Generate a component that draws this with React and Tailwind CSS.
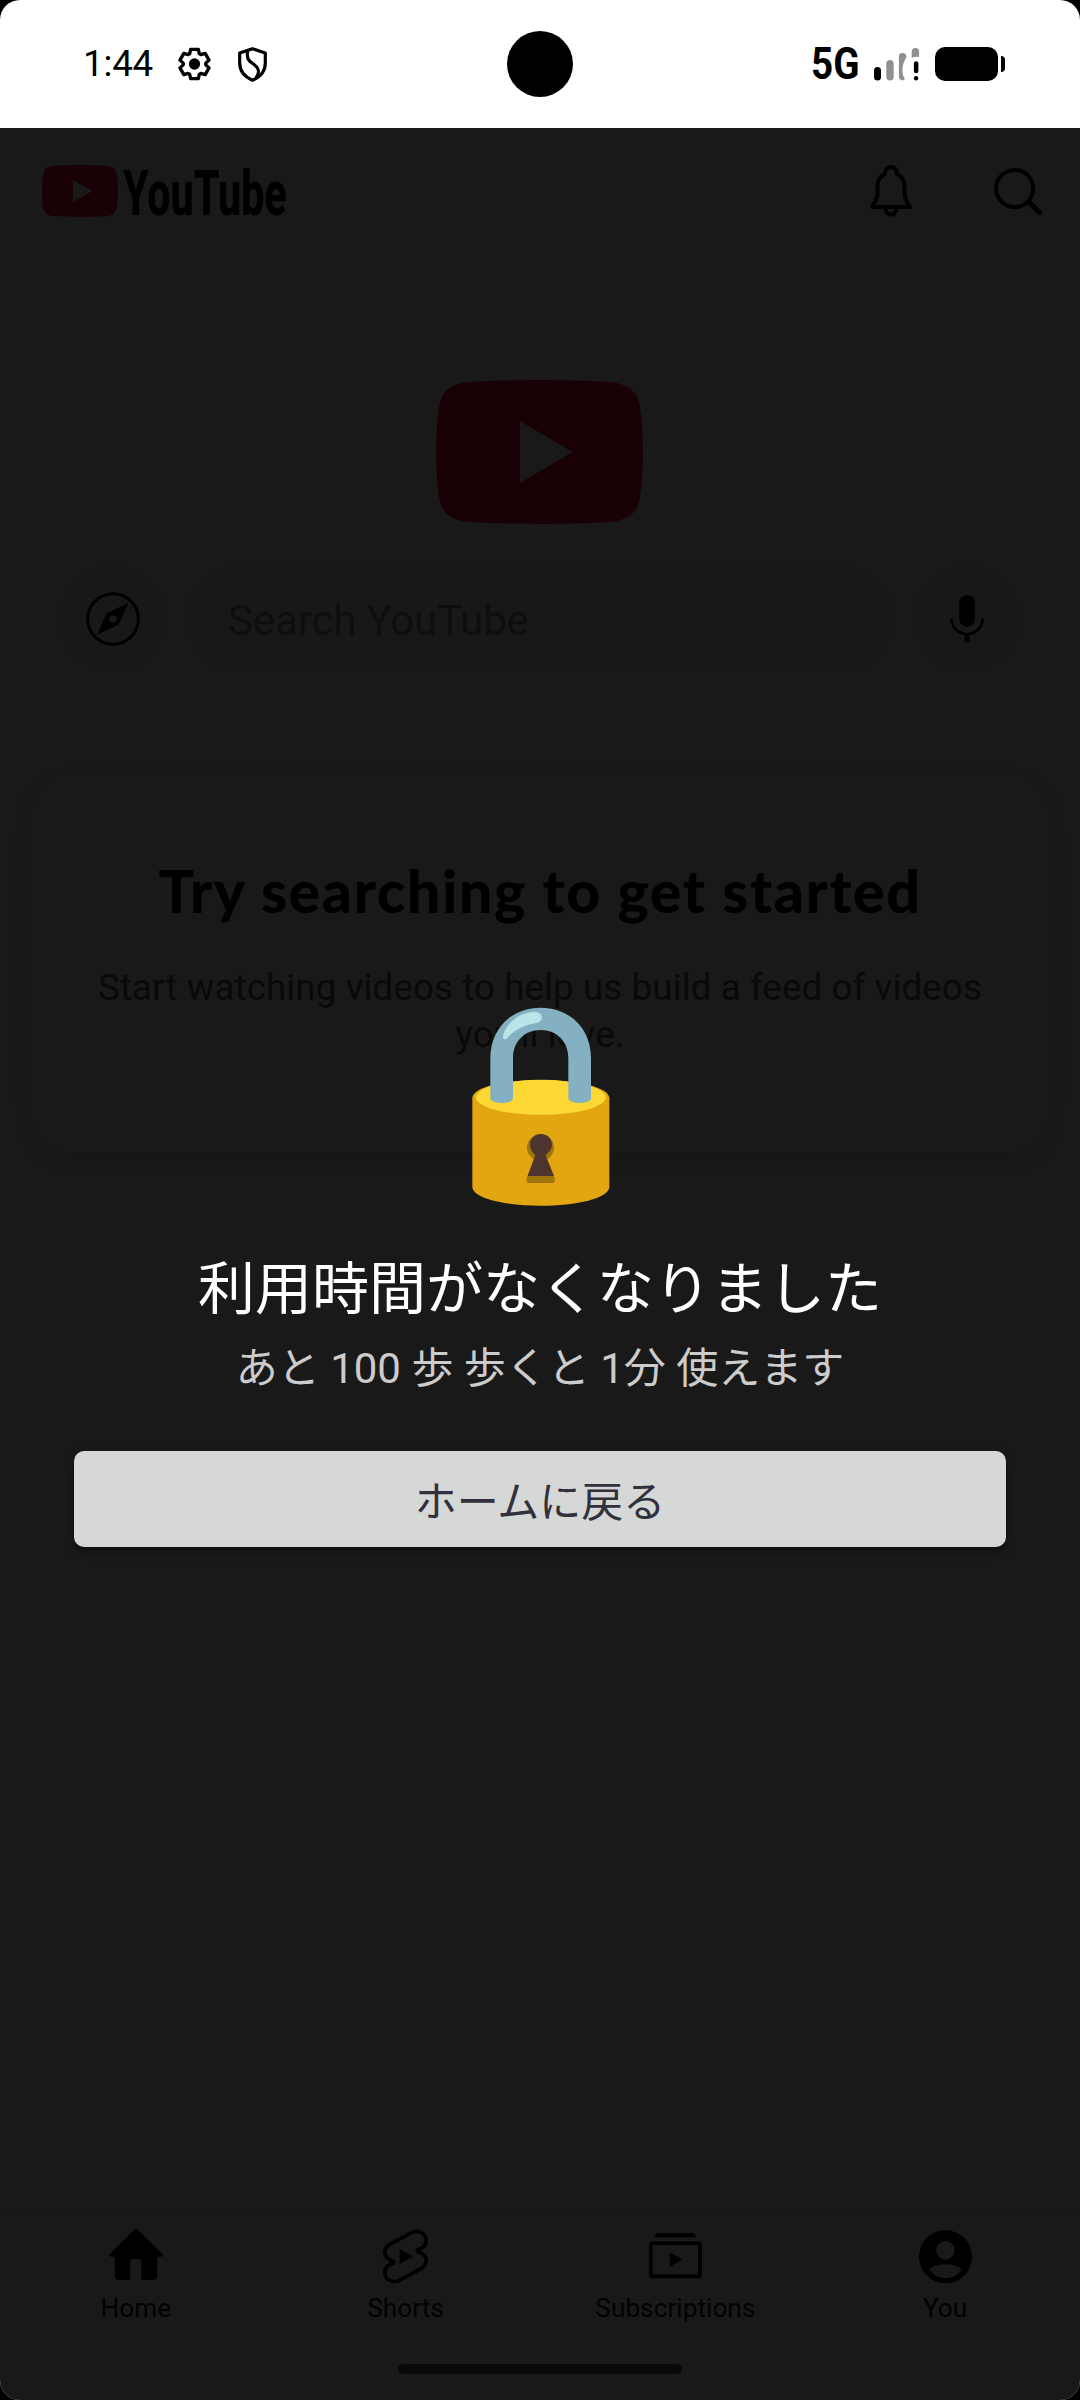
function SettingsGear() {
    return (
        <svg viewBox="-17 -17 34 34" className="h-[34px] w-[33px]">
            <path
                d="M-5-10.5-4-15H4l1 4.5 1.6.9L11-11l4 7-3.4 3.1v1.8L15 4l-4 7-4.4-1.4-1.6.9L4 15h-8l-1-4.5-1.6-.9L-11 11l-4-7 3.4-3.1V-.9L-15-4l4-7 4.4 1.4Z"
                fill="none" stroke="black" strokeWidth="3.4" strokeLinejoin="round"
            />
            <circle r="5.8" />
        </svg>
    )
}

function Shield() {
    return (
        <svg viewBox="0 0 29 35" className="h-[35px] w-[29px]" fill="none" stroke="black" strokeWidth="3.2" strokeLinejoin="round">
            <path d="M14.5 1.7 27.3 6v10c0 8-5.3 14-12.8 17.2C7 30 1.7 24 1.7 16V6Z" />
            <path d="M9.6 4c-1.4 9 2.4 10.5 6.4 13.5 6 4.5 5.5 8.5 2 13.5" />
        </svg>
    )
}

function Signal() {
    return (
        <svg viewBox="0 0 46 33" className="h-[33px] w-[46px]">
            <rect y="19" width="7" height="13.5" rx="3.5" />
            <g fill="#909090">
                <rect x="12.3" y="12" width="7.4" height="20.5" rx="3.7" />
                <path d="M24.9 8.7a3.7 3.7 0 0 1 7.4 0v.8q-7 11.500-1.500 21.800c-2.300 2.500-5.900.5-5.900-2.500Z" />
                <path d="M37.7 3.7a3.7 3.7 0 0 1 7.4 0V9q-3.7-1-7.4 1Z" />
            </g>
            <rect x="39.9" y="13.3" width="4.5" height="12" rx="2.2" />
            <circle cx="42.1" cy="30.2" r="2.2" />
        </svg>
    )
}

function StatusBar() {
    return (
        <div className="relative flex h-32 shrink-0 items-center justify-between bg-white pr-[75px] pl-[83px] text-black">
            <div className="flex items-center">
                <span className="w-[95px] text-[36.75px] leading-none tracking-[-0.2px]">1:44</span>
                <SettingsGear />
                <div className="w-[27px]" />
                <Shield />
            </div>
            <div className="flex items-center">
                <span className="mr-[7px] w-[56px] origin-left scale-x-[0.877] text-[44px] leading-[52px] font-bold">5G</span>
                <Signal />
                <div className="ml-[15px] h-[34px] w-[63px] rounded-[10px] bg-black" />
                <div className="ml-[3px] h-4 w-1 rounded-r-full bg-black" />
            </div>
            <div className="absolute top-[31px] left-[507px] size-[66px] rounded-full bg-black" />
        </div>
    )
}

function PlayLogo({ className }) {
    return (
        <svg viewBox="0 0 207 144" className={className} preserveAspectRatio="none">
            <path
                fill="#ff0033"
                d="M103.5 0C103.5 0 55 0 29 2.5 13 5 5 13 3.5 25 0 45 0 72 0 72s0 27 3.5 47c1.5 12 9.5 20 25.5 22.5C55 144 103.5 144 103.5 144s48.5 0 74.5-2.5c16-2.5 24-10.5 25.5-22.5 3.5-20 3.5-47 3.5-47s0-27-3.5-47C202 13 194 5 178 2.5 152 0 103.5 0 103.5 0Z"
            />
            <path fill="white" d="m84 41 52.7 31L84 103Z" />
        </svg>
    )
}

function Header() {
    return (
        <div className="flex h-[126px] items-center pr-[37px] pl-[42px]">
            <PlayLogo className="h-[52px] w-[76px]" />
            <span className="ml-[5px] origin-left scale-x-[0.653] pt-[5px] text-[63px] leading-[80px] font-extrabold text-black">YouTube</span>
            <svg viewBox="0 0 42 52" className="ml-auto h-[52px] w-[42px]" fill="none" stroke="black" strokeWidth="4" strokeLinejoin="round">
                <path d="M21 2c-4 0-6.2 3-6 7-6 3-7.5 7.5-7.5 12v8c0 4-2.5 8-5.3 13h37.6c-2.8-5-5.3-9-5.3-13v-8c0-4.5-1.5-9-7.5-12 .2-4-2-7-6-7Z" />
                <path d="M15.5 43a5.5 6.8 0 0 0 11 0" />
            </svg>
            <svg viewBox="0 0 49 49" className="ml-[82px] size-[49px]" fill="none" stroke="black" strokeWidth="4">
                <circle cx="20.7" cy="21.5" r="18.6" />
                <path d="m34.5 34.5 11 11" strokeWidth="5" strokeLinecap="round" />
            </svg>
        </div>
    )
}

function SearchRow() {
    return (
        <div className="mt-[42px] flex h-[106px] gap-5 px-[60px]">
            <div className="flex w-[106px] items-center justify-center rounded-full bg-[#f2f2f2]">
                <svg viewBox="0 0 54 54" className="size-[54px]">
                    <circle cx="27" cy="27" r="25.3" fill="none" stroke="black" strokeWidth="2.9" />
                    <path d="M42.5 11 32.7 32.6 11 43l9.8-22Z" />
                    <circle cx="27" cy="27" r="3.6" fill="#f2f2f2" />
                </svg>
            </div>
            <div className="flex flex-1 items-center rounded-full bg-[#f2f2f2] pt-[2px] pl-[42px] text-[42px] tracking-[-0.13px] text-[#8c8c8c]">
                Search YouTube
            </div>
            <div className="flex w-[106px] items-center justify-center rounded-full bg-[#f2f2f2]">
                <svg viewBox="0 0 34 48" className="h-12 w-[34px]">
                    <rect x="9.2" width="15.8" height="31.7" rx="7.9" />
                    <path d="M1.4 23.5a15.7 15.5 0 0 0 31.4 0" fill="none" stroke="black" strokeWidth="2.6" />
                    <path d="M14.6 39h5v8.3h-5Z" />
                </svg>
            </div>
        </div>
    )
}

function EmptyFeedCard() {
    return (
        <div className="mx-8 mt-[104px] h-[376px] rounded-[32px] bg-white px-8 pt-[75px] text-center shadow-[0_6px_36px_rgba(0,0,0,0.2)]">
            <h2 className="font-[Lato] text-[59px] leading-[80px] font-black tracking-[1.6px] whitespace-nowrap text-black">Try searching to get started</h2>
            <p className="mt-[33px] text-[36.75px] leading-[47px] tracking-[0.08px] text-[#606060]">
                Start watching videos to help us build a feed of videos<br />you'll love.
            </p>
        </div>
    )
}

function HomeIcon() {
    return (
        <svg viewBox="0 0 54 58" className="h-[58px] w-[54px]">
            <path d="M27 0 54 26.5q0 2.2-2 2.2h-3.7V48q0 4-4 4H32.4V31.3h-11V52H9.8q-4 0-4-4V28.7H2q-2 0-1.7-2.2Z" />
        </svg>
    )
}

function ShortsIcon() {
    return (
        <svg viewBox="0 -1.5 45 58" className="h-[58px] w-[45px]">
            <path
                fill="none" stroke="black" strokeWidth="3.7"
                d="M28.5 3.2C35-.5 43.2 4 43.2 11c0 3.5-2.2 6.5-5.2 8l-3.5 1.5V22l3.5 1.5c3.5 2 5.2 4.5 5.2 7.5 0 3-1.7 6-4.7 8l-22 11.8C10 54.5 1.8 50 1.8 43c0-3.5 2.2-6.5 5.2-8l3.5-1.5V32L7 30.5C3.5 28.5 1.8 26 1.8 23c0-3 1.7-6 4.7-8Z"
            />
            <path d="M16.5 19.3 30 27l-13.5 7.7Z" />
        </svg>
    )
}

function SubscriptionsIcon() {
    return (
        <svg viewBox="0 -5 53 58" className="h-[58px] w-[53px]">
            <path d="M5.5 4.3Q6.5 0 10 0h32.5q3.5 0 4.5 4.3Z" />
            <rect x="1.85" y="10.1" width="49" height="33.3" rx="2" fill="none" stroke="black" strokeWidth="3.7" />
            <path d="m20.7 19.3 13 7.2-13 7.2Z" />
        </svg>
    )
}

function YouIcon() {
    return (
        <svg viewBox="0 -2.3 53 58" className="h-[58px] w-[53px]">
            <circle cx="26.5" cy="26.5" r="26.5" />
            <g fill="white">
                <circle cx="26.5" cy="20" r="9.2" />
                <path d="M10.2 39.3C14 35.5 20 34 26.5 34s12.5 1.5 16.3 5.3C39 45 33 47.7 26.5 47.7S14 45 10.2 39.3Z" />
            </g>
        </svg>
    )
}

const tabs = [
    { label: "Home", Icon: HomeIcon },
    { label: "Shorts", Icon: ShortsIcon },
    { label: "Subscriptions", Icon: SubscriptionsIcon },
    { label: "You", Icon: YouIcon },
]

function BottomNav() {
    return (
        <div className="mt-auto flex h-[189px] flex-col items-center border-t-3 border-[#e5e5e5]">
            <div className="grid w-full grid-cols-4 pt-[14px] pl-px">
                {tabs.map(({ label, Icon }) => (
                    <div key={label} className="flex flex-col items-center">
                        <Icon />
                        <span className="mt-[6px] text-[26.25px] leading-[32px] text-[#0f0f0f]">{label}</span>
                    </div>
                ))}
            </div>
            <div className="mt-[40px] h-[10px] w-[284px] rounded-full bg-[#505050]" />
        </div>
    )
}

function Lock() {
    return (
        <svg viewBox="90 75 420 606" className="h-[202px] w-[140px]">
            <path fill="#e2a610" d="M97 355C97 320 200 300 302 300s206 20 206 55v265c0 35-100 57-206 57S97 655 97 620Z" />
            <ellipse cx="302.5" cy="352" rx="195" ry="52.5" fill="#fdd835" />
            <path fill="#84b0c1" d="M151 235C151 145 215 83 302 83s151 62 151 152v122c-8 16-60 16-68 0V235c0-50-34-85-83-85s-83 35-83 85v122c-8 16-60 16-68 0Z" />
            <path fill="#b9e4ea" d="M189 172C190 135 245 88 292 97c18 4 18 27 1 31-34 6-63 15-90 45-8 8-14 5-14-1Z" />
            <path fill="#9e740b" d="M302 464c24 0 40 17 40 38 0 16-8 28-20 36l22 56c2 9-1 15-8 15h-68c-7 0-10-6-8-15l22-56c-13-8-21-20-21-36 0-21 17-38 41-38Z" />
            <path fill="#4e342e" d="M302 462c20 0 34 14 34 32 0 13-8 22-20 31l26 63h-79l23-63c-9-9-16-18-16-31 0-18 13-32 32-32Z" />
        </svg>
    )
}

function LockOverlay() {
    return (
        <div className="absolute inset-0 flex flex-col items-center bg-black/[0.902] px-[74px] pt-[877px]">
            <Lock />
            <h1 className="mt-[41px] text-[57px] leading-[84px] text-white">利用時間がなくなりました</h1>
            <p className="mt-[7px] text-[42px] leading-[60px] text-[#cccccc]">あと 100 歩 歩くと 1分 使えます</p>
            <button type="button" className="mt-[52px] h-24 w-full rounded-[10px] bg-[#d6d7d7] pt-[8px] text-[42px] leading-none text-[#31313b] shadow-[0_4px_8px_rgba(0,0,0,0.4)]">
                ホームに戻る
            </button>
        </div>
    )
}

export default function App() {
    return (
        <div className="h-[2400px] w-[1080px] bg-black font-[Roboto,'Noto_Sans_CJK_JP',sans-serif]">
            <div className="flex h-full flex-col overflow-hidden rounded-[20px]">
                <StatusBar />
                <div className="relative flex flex-1 flex-col bg-white">
                    <Header />
                    <PlayLogo className="mt-[126px] ml-[436px] h-36 w-[207px]" />
                    <SearchRow />
                    <EmptyFeedCard />
                    <BottomNav />
                    <LockOverlay />
                </div>
            </div>
        </div>
    )
}
